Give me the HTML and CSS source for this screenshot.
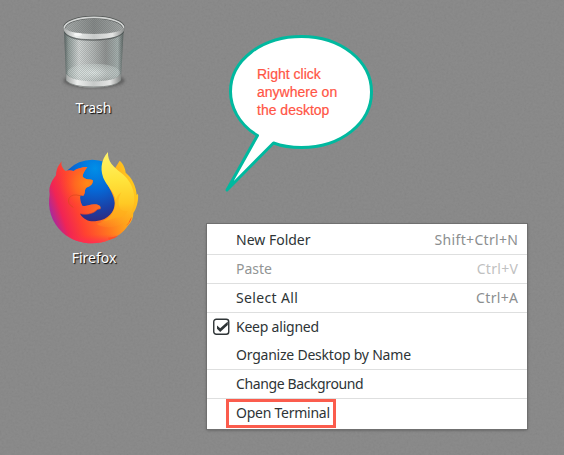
FILE: index.html
```html
<!DOCTYPE html>
<html lang="en">
<head>
<meta charset="utf-8">
<title>Desktop</title>
<link rel="stylesheet" href="styles.css">
</head>
<body>
<main class="desktop">
  <svg class="grain" width="564" height="455" aria-hidden="true">
    <filter id="noise" x="0" y="0" width="100%" height="100%"><feTurbulence type="fractalNoise" baseFrequency=".45" numOctaves="3" seed="4"/><feColorMatrix type="saturate" values="0"/><feComponentTransfer><feFuncA type="linear" slope="0" intercept="1"/></feComponentTransfer></filter>
    <rect width="564" height="455" filter="url(#noise)"/>
  </svg>

  <figure class="shortcut trash">
    <svg viewBox="0 0 270 255" width="90" height="85" aria-hidden="true">
      <defs>
        <linearGradient id="body"><stop offset="0" stop-color="#56605f"/><stop offset=".07" stop-color="#8f9b98"/><stop offset=".25" stop-color="#d0d4d3"/><stop offset=".48" stop-color="#b2b6b5"/><stop offset=".7" stop-color="#909392"/><stop offset=".9" stop-color="#a5b0ae"/><stop offset="1" stop-color="#58615f"/></linearGradient>
        <linearGradient id="rim"><stop offset="0" stop-color="#a5a8a7"/><stop offset=".2" stop-color="#eceeed"/><stop offset=".5" stop-color="#c7cac9"/><stop offset=".8" stop-color="#e4e5e4"/><stop offset="1" stop-color="#858887"/></linearGradient>
        <linearGradient id="inside"><stop offset="0" stop-color="#a7abaa"/><stop offset=".5" stop-color="#858988"/><stop offset="1" stop-color="#a4a8a7"/></linearGradient>
        <radialGradient id="floor"><stop offset="0" stop-color="#e2eae8" stop-opacity=".9"/><stop offset="1" stop-color="#d1dbd8" stop-opacity=".4"/></radialGradient>
        <pattern id="mesh" width="6" height="6" patternUnits="userSpaceOnUse"><path d="M0 0h3v3H0zM3 3h3v3H3z" fill="#4c5150" opacity=".2"/></pattern>
        <filter id="soft" x="-20%" y="-50%" width="140%" height="200%"><feGaussianBlur stdDeviation="4"/></filter>
      </defs>
      <ellipse cx="132" cy="227" rx="92" ry="22" fill="#222" opacity=".4" filter="url(#soft)"/>
      <path d="M42 74L48 225Q68 248 131 248T213 225L221 74Z" fill="url(#body)"/>
      <ellipse cx="131" cy="203" rx="79" ry="27" fill="url(#floor)"/>
      <path d="M42 74L48 215Q68 235 131 235T213 215L221 74Z" fill="url(#mesh)"/>
      <path d="M49 207Q67 229 131 229T213 207L212 228Q195 246 131 246T49 228Z" fill="url(#rim)"/>
      <path d="M49 228Q67 246 131 246T212 228" fill="none" stroke="#626665" stroke-width="2"/>
      <ellipse cx="132" cy="69" rx="88" ry="30" fill="url(#inside)"/>
      <ellipse cx="132" cy="69" rx="88" ry="30" fill="url(#mesh)"/>
      <path d="M43 69a89 32 0 0 1 178 0" fill="none" stroke="#505453" stroke-width="9"/>
      <path d="M43 69a89 32 0 0 1 178 0" fill="none" stroke="#d4d6d5" stroke-width="5"/>
      <path d="M40 67Q43 98 132 100T224 67L222 81Q209 105 132 107T42 81Z" fill="#3e4342" opacity=".6"/>
      <path d="M40 64Q48 87 132 87T224 64L223 76Q211 102 132 103T41 76Z" fill="url(#rim)"/>
      <ellipse cx="84" cy="88" rx="12" ry="5" fill="#fff" opacity=".6"/>
    </svg>
    <figcaption>Trash</figcaption>
  </figure>

  <figure class="shortcut firefox">
    <svg viewBox="0 0 315 312" width="105" height="104" aria-hidden="true">
      <defs>
        <radialGradient id="globe" gradientUnits="userSpaceOnUse" cx="165" cy="70" r="165"><stop offset="0" stop-color="#008fe8"/><stop offset=".4" stop-color="#0668d6"/><stop offset=".75" stop-color="#1b3fa5"/><stop offset="1" stop-color="#342779"/></radialGradient>
        <linearGradient id="ring" gradientUnits="userSpaceOnUse" x1="285" y1="130" x2="35" y2="215"><stop offset="0" stop-color="#ffc81e"/><stop offset=".25" stop-color="#ffa01c"/><stop offset=".45" stop-color="#ff7420"/><stop offset=".7" stop-color="#ff4230"/><stop offset=".88" stop-color="#f02455"/><stop offset="1" stop-color="#a92a9c"/></linearGradient>
        <radialGradient id="face" gradientUnits="userSpaceOnUse" cx="142" cy="115" r="85"><stop offset="0" stop-color="#ff8a16"/><stop offset=".45" stop-color="#ff6b1f" stop-opacity=".85"/><stop offset="1" stop-color="#ff4230" stop-opacity="0"/></radialGradient>
        <linearGradient id="base" x1="0" y1="0" x2="0" y2="1"><stop offset=".7" stop-color="#ff3045" stop-opacity="0"/><stop offset="1" stop-color="#ff2460" stop-opacity=".75"/></linearGradient>
        <linearGradient id="flame" gradientUnits="userSpaceOnUse" x1="205" y1="21" x2="215" y2="262"><stop offset="0" stop-color="#fff36b"/><stop offset=".35" stop-color="#ffe43c"/><stop offset=".65" stop-color="#ffc924"/><stop offset="1" stop-color="#ff951d" stop-opacity="0"/></linearGradient>
        <path id="fox-body" d="M66 49C60 60 69 71 76 78Q88 73 101 78Q115 67 142 66C137 73 128 86 128 94C133 105 148 103 158 105C160 116 152 124 139 128C132 134 137 145 130 152L121 151Q118 166 127 182C143 185 149 178 162 178C177 177 185 185 181 192C171 190 168 201 154 205C143 209 132 208 120 206C132 226 151 231 170 228C204 224 225 201 224 174C223 150 207 131 200 110L239 47C251 57 256 72 257 83C277 99 289 126 290 150L294 146C296 165 291 188 280 204C280 218 275 232 263 243C249 264 230 276 207 285C163 304 104 295 68 263C33 232 22 188 29 148C24 123 40 101 48 91C49 71 56 59 66 49Z"/>
        <clipPath id="body-clip"><use href="#fox-body"/></clipPath>
      </defs>
      <circle cx="157" cy="147" r="103" fill="url(#globe)"/>
      <use href="#fox-body" fill="url(#ring)"/>
      <circle cx="142" cy="115" r="85" fill="url(#face)" clip-path="url(#body-clip)"/>
      <path d="M121 152Q94 145 87 160Q81 177 100 187" fill="none" stroke="#d9461c" stroke-width="3" opacity=".7"/>
      <path d="M68 263C104 295 163 304 207 285C238 274 260 253 270 220L120 206Q80 210 50 245Z" fill="url(#base)"/>
      <path d="M204 21C181 46 179 80 195 109C205 127 222 142 226 164C230 200 208 227 170 237C198 255 247 248 269 213C298 161 279 110 243 83C222 67 202 50 204 21Z" fill="url(#flame)"/>
      <path d="M226 164Q232 150 244 142Q229 166 239 190Q246 202 263 198Q252 221 229 218Q205 226 178 232Q225 215 226 164Z" fill="#ffad1a" opacity=".5"/>
      <path d="M120 206C132 208 143 209 154 205C168 201 171 190 181 192" fill="none" stroke="#d93d28" stroke-width="2"/>
      <path d="M257 243C265 239 274 226 275 216L271 222Q268 234 257 243ZM207 285Q224 281 235 272Q220 276 204 278Z" fill="#ff4c27"/>
    </svg>
    <figcaption>Firefox</figcaption>
  </figure>

  <aside class="callout">
    <svg viewBox="0 0 170 175" width="170" height="175" aria-hidden="true">
      <path d="M42.5 110.5C23 99 15.500 81 15.500 66.500C15.500 35 47 11.500 86.500 11.500C126 11.500 156.500 36 156.500 67C156.500 98 126 122.500 86.500 122.500C77 122.500 67 121.200 58.500 118L12 165Z"/>
    </svg>
    <p>Right click<br>anywhere on<br>the desktop</p>
  </aside>

  <nav class="menu">
    <div class="item"><span>New Folder</span><kbd>Shift+Ctrl+N</kbd></div>
    <hr>
    <div class="item disabled"><span>Paste</span><kbd>Ctrl+V</kbd></div>
    <hr>
    <div class="item select-all"><span>Select All</span><kbd>Ctrl+A</kbd></div>
    <hr>
    <div class="item keep-aligned">
      <svg class="check" viewBox="0 0 17 17" width="17" height="17" aria-hidden="true"><rect x=".75" y="1.250" width="15" height="15" rx="2.500"/><path d="M4 7.500L7.200 10.300L14.800 3.500V7L7.200 14L4 10.800Z"/></svg>
      <span>Keep aligned</span>
    </div>
    <div class="item organize"><span>Organize Desktop by Name</span></div>
    <hr>
    <div class="item background"><span>Change Background</span></div>
    <hr>
    <div class="item highlighted"><span>Open Terminal</span></div>
  </nav>
</main>
</body>
</html>
```
FILE: styles.css
```css
*, *::after { box-sizing: border-box; }
body { margin: 0; }
.desktop {
  position: relative;
  width: 564px;
  height: 455px;
  overflow: hidden;
  background: #868686;
  font-family: "Noto Sans", "Open Sans", sans-serif;
}
.grain { position: absolute; inset: 0; opacity: .06; }
.shortcut {
  position: absolute;
  margin: 0;
  display: flex;
  flex-direction: column;
  align-items: center;
}
.shortcut svg { display: block; }
.trash { left: 50px; top: 5px; width: 90px; }
.firefox { left: 40px; top: 145px; width: 105px; }
.shortcut figcaption {
  color: #fff;
  font-size: 14px;
  line-height: 20px;
  text-shadow: 1px 1px 1px #000;
}
.trash figcaption { margin: 8px 3px 0 0; }
.firefox figcaption { margin: -1px 0 0 3px; }
.callout { position: absolute; left: 215px; top: 25px; width: 170px; height: 175px; }
.callout path { fill: #fff; stroke: #00b99f; stroke-width: 3; stroke-linejoin: round; }
.callout p {
  position: absolute;
  left: 42px;
  top: 40px;
  margin: 0;
  color: #ff5545;
  font: 14px/18px "Liberation Sans", Arial, sans-serif;
  -webkit-text-stroke: .2px #ff5545;
  white-space: nowrap;
}
.menu {
  position: absolute;
  left: 207px;
  top: 224px;
  width: 320px;
  height: 205px;
  padding: 2px 0;
  background: #fff;
  box-shadow: 0 0 0 1px #707070, 0 1px 3px rgba(0, 0, 0, .4);
}
.menu hr { margin: 0; border: 0; height: 1px; background: #dedfdf; }
.item {
  position: relative;
  display: flex;
  justify-content: space-between;
  align-items: center;
  height: 28px;
  padding: 0 9px 0 29px;
  color: #2e3436;
  font-size: 14px;
  line-height: 20px;
  white-space: nowrap;
}
.item kbd { font: inherit; color: #8b8e8f; letter-spacing: .33px; margin-right: -.33px; }
.disabled { color: #929595; }
.disabled kbd { color: #bfc1c1; }
.select-all span { letter-spacing: .35px; }
.keep-aligned span { letter-spacing: -.22px; }
.organize span { letter-spacing: -.22px; }
.background span { letter-spacing: -.38px; }
.highlighted span { letter-spacing: -.25px; }
.check { position: absolute; left: 6px; top: 5px; }
.check rect { fill: #fff; stroke: #2e3436; stroke-width: 1.4; }
.check path { fill: #2e3436; }
.highlighted::after {
  content: "";
  position: absolute;
  left: 19px;
  top: 0;
  width: 110px;
  height: 29px;
  border: 3px solid #fb5c4d;
}
```
